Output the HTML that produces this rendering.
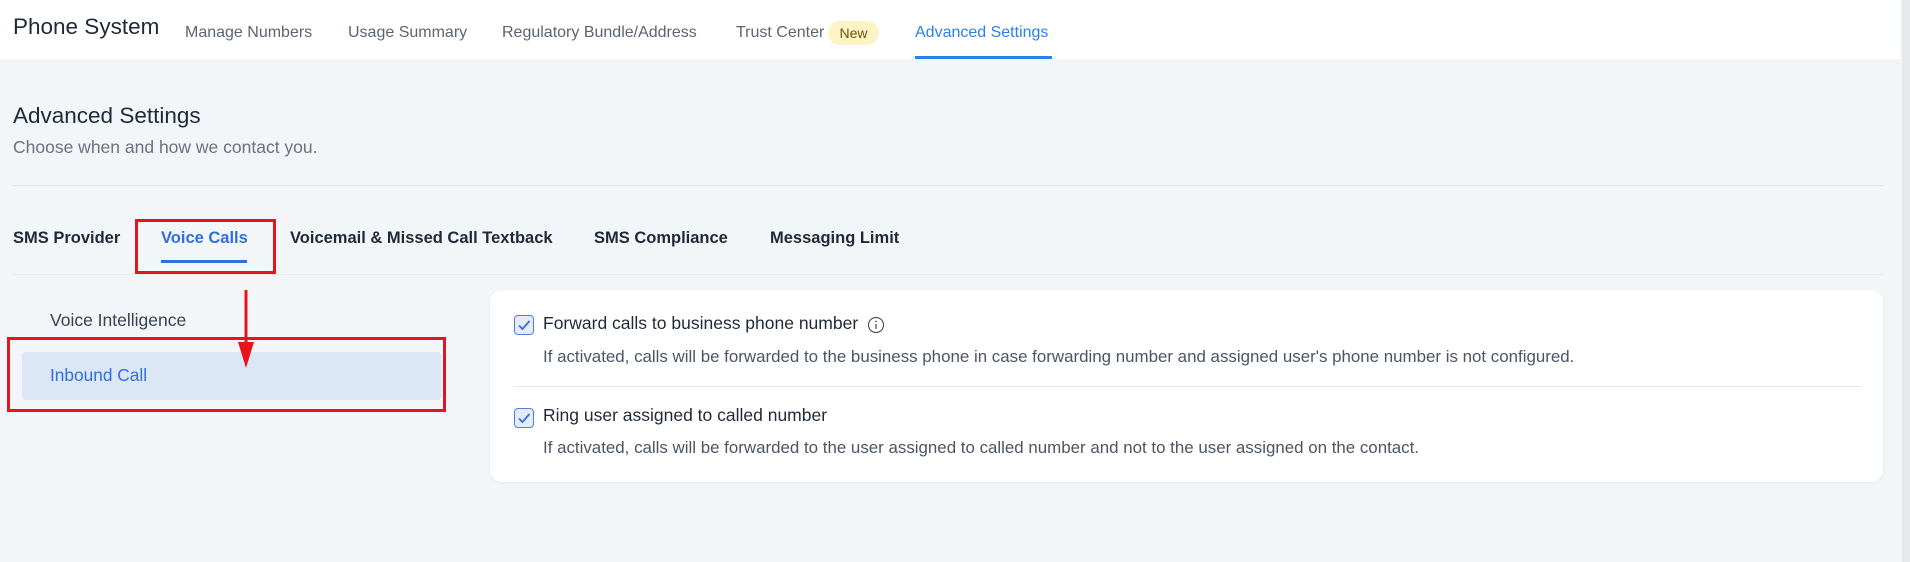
<!DOCTYPE html>
<html><head><style>
*{margin:0;padding:0;box-sizing:border-box}
body{width:1910px;height:562px;background:#f2f6f9;font-family:"Liberation Sans",sans-serif;position:relative;overflow:hidden;color:#1f2937}
.a{position:absolute;white-space:nowrap}
.hdr{position:absolute;left:0;top:0;width:1900px;height:59px;background:#fff}
.nav{font-size:16px;color:#5b6472;top:24px}
.tab{font-size:16.5px;font-weight:bold;color:#1f2937;top:229px}
.desc{font-size:16.9px;color:#4b5563}
.cb{position:absolute;width:20px;height:20px;border:1.5px solid #4f7fd9;border-radius:4px;background:#e3ecfb}
</style></head><body>
<div class="hdr"></div>
<div class="a" style="left:13px;top:14px;font-size:22.5px;color:#1f2937">Phone System</div>
<div class="a nav" style="left:185px">Manage Numbers</div>
<div class="a nav" style="left:348px">Usage Summary</div>
<div class="a nav" style="left:502px">Regulatory Bundle/Address</div>
<div class="a nav" style="left:736px">Trust Center</div>
<div class="a" style="left:828px;top:21px;width:51px;height:24px;border-radius:12px;background:#fdf3c4;color:#6b5410;font-size:14px;text-align:center;line-height:24px">New</div>
<div class="a nav" style="left:915px;color:#2f80e6">Advanced Settings</div>
<div class="a" style="left:915px;top:56px;width:137px;height:3px;background:#2f80e6"></div>
<div class="a" style="left:1902px;top:0;width:8px;height:562px;background:#e6e9ec"></div>

<div class="a" style="left:13px;top:103px;font-size:22.5px;color:#1f2937">Advanced Settings</div>
<div class="a" style="left:13px;top:137px;font-size:17.5px;color:#6b7280">Choose when and how we contact you.</div>
<div class="a" style="left:13px;top:185px;width:1870px;height:1px;background:#e3e7eb"></div>

<div class="a tab" style="left:13px">SMS Provider</div>
<div class="a tab" style="left:161px;color:#2f6fe0">Voice Calls</div>
<div class="a" style="left:161px;top:260px;width:86px;height:3px;background:#2f6fe0"></div>
<div class="a tab" style="left:290px">Voicemail &amp; Missed Call Textback</div>
<div class="a tab" style="left:594px">SMS Compliance</div>
<div class="a tab" style="left:770px">Messaging Limit</div>
<div class="a" style="left:13px;top:274px;width:1870px;height:1px;background:#e8ecef"></div>
<div class="a" style="left:135px;top:219px;width:141px;height:55px;border:3px solid #e8141b"></div>

<div class="a" style="left:50px;top:310px;font-size:17.5px;color:#374151">Voice Intelligence</div>
<div class="a" style="left:22px;top:352px;width:419px;height:48px;background:#dbe7f7;border-radius:3px"></div>
<div class="a" style="left:50px;top:365px;font-size:17.3px;color:#2f6fe0">Inbound Call</div>
<div class="a" style="left:7px;top:337px;width:439px;height:75px;border:3px solid #e8141b"></div>
<svg class="a" style="left:236px;top:290px" width="20" height="80"><line x1="10" y1="0" x2="10" y2="62" stroke="#e8141b" stroke-width="3"/><polygon points="2,52 18,52 10,78" fill="#e8141b"/></svg>

<div class="a" style="left:490px;top:290px;width:1393px;height:192px;background:#fff;border-radius:12px;box-shadow:0 1px 3px rgba(0,0,0,.06)"></div>
<div class="cb" style="left:514px;top:315px"></div>
<svg class="a" style="left:514px;top:315px" width="20" height="20"><path d="M5 10.5l3.5 3.5 7-8" stroke="#3a6fd6" stroke-width="1.8" fill="none"/></svg>
<div class="a" style="left:543px;top:313px;font-size:17.5px;color:#1f2937">Forward calls to business phone number</div>
<svg class="a" style="left:867px;top:316px" width="18" height="18"><circle cx="9" cy="9" r="7.5" stroke="#555" stroke-width="1.2" fill="none"/><line x1="9" y1="8" x2="9" y2="13" stroke="#555" stroke-width="1.3"/><circle cx="9" cy="5.5" r=".9" fill="#555"/></svg>
<div class="a desc" style="left:543px;top:347px">If activated, calls will be forwarded to the business phone in case forwarding number and assigned user's phone number is not configured.</div>
<div class="a" style="left:514px;top:386px;width:1347px;height:1px;background:#e3e7eb"></div>
<div class="cb" style="left:514px;top:408px"></div>
<svg class="a" style="left:514px;top:408px" width="20" height="20"><path d="M5 10.5l3.5 3.5 7-8" stroke="#3a6fd6" stroke-width="1.8" fill="none"/></svg>
<div class="a" style="left:543px;top:405px;font-size:17.5px;color:#1f2937">Ring user assigned to called number</div>
<div class="a desc" style="left:543px;top:438px">If activated, calls will be forwarded to the user assigned to called number and not to the user assigned on the contact.</div>
</body></html>
